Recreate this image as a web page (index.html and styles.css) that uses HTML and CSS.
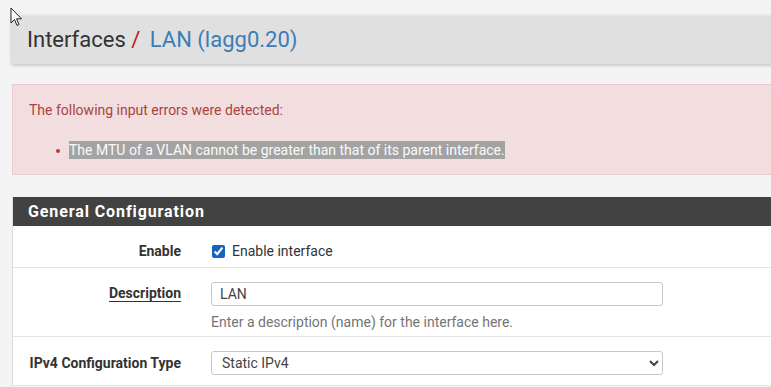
FILE: index.html
```html
<!DOCTYPE html>
<html lang="en">
<head>
<meta charset="UTF-8">
<title>Interfaces / LAN (lagg0.20)</title>
<link rel="stylesheet" href="styles.css">
</head>
<body>
<svg class="cursor" width="13" height="20" viewBox="0 0 13 20">
    <path d="M1 1 L1 16 L4.5 12.5 L7 18.5 L9 17.6 L6.6 11.8 L11.5 11.8 Z" fill="#fff" stroke="#222" stroke-width="1" stroke-linejoin="round"/>
</svg>
<div class="page">
    <div class="breadcrumb">
        <h1>Interfaces <span class="sep">/</span> <a href="#">LAN (lagg0.20)</a></h1>
    </div>

    <div class="alert">
        <p>The following input errors were detected:</p>
        <ul>
            <li><span class="selected">The MTU of a VLAN cannot be greater than that of its parent interface.</span></li>
        </ul>
    </div>

    <div class="panel">
        <div class="panel-heading">General Configuration</div>
        <div class="panel-body">
            <div class="row row-enable">
                <div class="label">Enable</div>
                <div class="field">
                    <label class="check"><input type="checkbox" checked> Enable interface</label>
                </div>
            </div>
            <div class="row row-desc">
                <div class="label"><span class="underline">Description</span></div>
                <div class="field">
                    <input class="control" type="text" value="LAN">
                    <div class="help">Enter a description (name) for the interface here.</div>
                </div>
            </div>
            <div class="row row-type">
                <div class="label">IPv4 Configuration Type</div>
                <div class="field">
                    <select class="control">
                        <option>Static IPv4</option>
                    </select>
                </div>
            </div>
        </div>
    </div>
</div>
</body>
</html>
```
FILE: styles.css
```css
body {
    margin: 0;
    background: #f4f4f4;
    font-family: 'Roboto', 'Liberation Sans', sans-serif;
    color: #212121;
    overflow: hidden;
}

.cursor {
    position: absolute;
    left: 10px;
    top: 7px;
    z-index: 5;
}

.page {
    padding: 16px 0 0 12px;
    width: 900px;
}

.breadcrumb {
    height: 48px;
    display: flex;
    align-items: center;
    background: #e0e0e0;
    box-shadow: 0 1px 4px rgba(0, 0, 0, 0.25);
}

.breadcrumb h1 {
    margin: 0 0 1px 15px;
    font-size: 22px;
    font-weight: 400;
    color: #333;
}

.breadcrumb .sep {
    color: #b71c1c;
    margin-right: 4px;
}

.breadcrumb a {
    color: #3c7cb8;
    text-decoration: none;
}

.alert {
    margin-top: 20px;
    height: 91px;
    box-sizing: border-box;
    padding: 15px 16px;
    background: #f2dede;
    border: 1px solid #ebccd1;
    color: #a94442;
    font-size: 14px;
}

.alert p {
    margin: 2px 0 0;
}

.alert ul {
    margin: 24px 0 0;
    padding-left: 40px;
    list-style: none;
}

.alert li {
    position: relative;
}

.alert li::before {
    content: "";
    position: absolute;
    left: -13px;
    top: 7px;
    width: 4px;
    height: 4px;
    border-radius: 50%;
    background: #c0392b;
}

.selected {
    background: #a3a3a3;
    color: #fafafa;
    padding: 1px 0;
}

.panel {
    margin-top: 22px;
    background: #fff;
    border-left: 1px solid #ddd;
}

.panel-heading {
    height: 29px;
    line-height: 29px;
    padding-left: 15px;
    background: #424242;
    color: #fff;
    font-size: 16px;
    font-weight: 700;
    letter-spacing: 0.9px;
}

.row {
    display: flex;
    box-sizing: border-box;
    border-bottom: 1px solid #e4e4e4;
}

.label {
    width: 183px;
    flex-shrink: 0;
    box-sizing: border-box;
    padding-right: 15px;
    text-align: right;
    font-size: 14px;
    font-weight: 700;
    color: #333;
}

.field {
    padding-left: 15px;
}

.row-enable {
    height: 42px;
    align-items: center;
    padding-top: 9px;
}

.check {
    display: flex;
    align-items: center;
    font-size: 14px;
    color: #333;
}

.check input {
    width: 13px;
    height: 13px;
    margin: 0 7px 0 1px;
    accent-color: #1565c0;
}

.row-desc {
    height: 69px;
    padding-top: 14px;
}

.row-desc .label {
    padding-top: 3px;
}

.underline {
    text-decoration: underline;
    text-underline-offset: 3px;
}

.control {
    display: block;
    width: 452px;
    height: 24px;
    box-sizing: border-box;
    padding: 0 8px;
    border: 1px solid #c8c8c8;
    border-radius: 3px;
    background: #fff;
    font-family: 'Roboto', 'Liberation Sans', sans-serif;
    font-size: 14px;
    color: #444;
}

.help {
    margin-top: 8px;
    font-size: 14px;
    color: #757575;
}

.row-type {
    height: 49px;
    align-items: center;
    padding-top: 4px;
}

.row-type .control {
    padding: 0 6px;
}
```
